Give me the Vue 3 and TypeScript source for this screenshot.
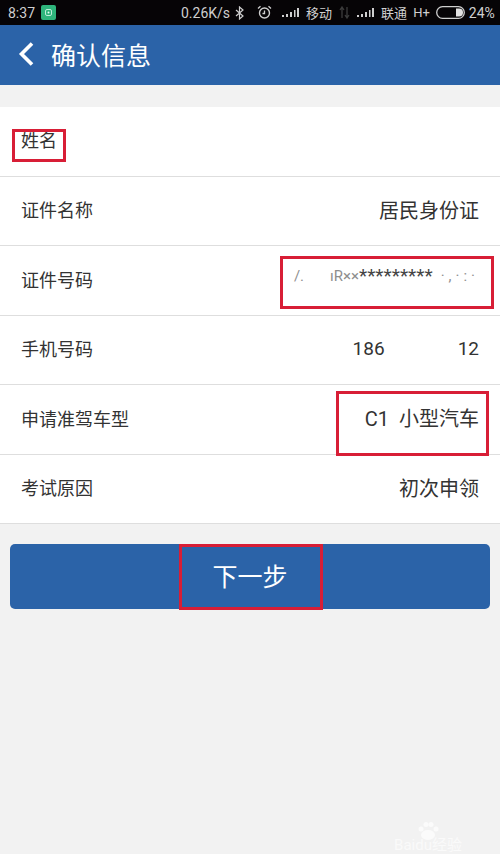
<template>
  <div class="page">
    <div class="status">
      <span class="time">8:37</span>
      <svg class="app-icon" width="15" height="15" viewBox="0 0 15 15">
        <rect width="15" height="15" rx="2" fill="#2fb57c" />
        <rect x="4.5" y="4.5" width="6" height="6" rx="1.5" fill="none" stroke="#bdeed8" />
        <circle cx="7.5" cy="7.5" r="1" fill="#e4fff2" />
      </svg>
      <span class="speed">0.26K/s</span>
      <svg class="bt" width="9" height="14" viewBox="0 0 9 14">
        <path d="M1 4l7 6-3.5 3V1L8 4 1 10" fill="none" stroke="#cfcfcf" stroke-width="1.2" />
      </svg>
      <svg class="alarm" width="15" height="15" viewBox="0 0 15 15">
        <circle cx="7.5" cy="8" r="5" fill="none" stroke="#cfcfcf" stroke-width="1.4" />
        <path d="M1 3.5L3.5 1.2M14 3.5L11.5 1.2M7.5 5.5V8.5H5.5" fill="none" stroke="#cfcfcf" stroke-width="1.3" />
      </svg>
      <svg class="signal" width="17" height="11" viewBox="0 0 17 11">
        <path d="M0 8h2v2H0zM4 7h2v3H4zM8 5h2v5H8zM12 3h1.500v7H12zM15 1h2v9h-2z" fill="#cfcfcf" />
      </svg>
      <span class="carrier">移动</span>
      <svg class="arrows" width="11" height="13" viewBox="0 0 11 13">
        <path d="M3 12V2M1 4l2-3 2 3M8 1v10M6 9l2 3 2-3" fill="none" stroke="#3c3c3c" stroke-width="1.300" />
      </svg>
      <svg class="signal second" width="17" height="11" viewBox="0 0 17 11">
        <path d="M0 8h2v2H0zM4 7h2v3H4zM8 5h2v5H8zM12 3h1.500v7H12zM15 1h2v9h-2z" fill="#cfcfcf" />
      </svg>
      <span class="carrier">联通</span>
      <span class="net">H+</span>
      <svg class="battery" width="29" height="13" viewBox="0 0 29 13">
        <rect x="0.700" y="0.700" width="27.600" height="11.600" rx="5.800" fill="none" stroke="#cfcfcf" stroke-width="1.300" />
        <path d="M20 2.500h3a4 4 0 0 1 0 8h-3z" fill="#e2e2e2" />
      </svg>
      <span class="percent">24%</span>
    </div>

    <header class="topbar">
      <svg class="back" width="16" height="24" viewBox="0 0 16 24">
        <path d="M14 1.500L3.500 12 14 22.500" fill="none" stroke="#fff" stroke-width="3.600" />
      </svg>
      <h1>确认信息</h1>
    </header>

    <section class="list">
      <div class="row name-row">
        <span class="name">姓名</span>
      </div>
      <div v-for="item in rows" :key="item.label" class="row">
        <span class="label">{{ item.label }}</span>
        <span v-if="item.label === '证件号码'" class="masked">
          <i>/.</i><i class="gap">ıR××</i><b>*********</b><i class="tail">·,·:·</i>
        </span>
        <span v-else class="value" :class="{ spaced: item.label === '手机号码' }">
          <template v-if="item.parts">
            <span v-for="part in item.parts" :key="part">{{ part }}</span>
          </template>
          <template v-else>{{ item.value }}</template>
        </span>
      </div>
      <div class="mark mark-name"></div>
      <div class="mark mark-id"></div>
      <div class="mark mark-type"></div>
    </section>

    <div class="action">
      <button class="next" type="button">下一步</button>
      <div class="mark mark-next"></div>
    </div>

    <div class="watermark">
      <svg width="24" height="20" viewBox="0 0 24 20">
        <ellipse cx="12" cy="14" rx="7" ry="5" fill="#fbfbfb" />
        <circle cx="5" cy="8" r="2.500" fill="#fbfbfb" />
        <circle cx="10" cy="3.500" r="2.500" fill="#fbfbfb" />
        <circle cx="15" cy="3.500" r="2.500" fill="#fbfbfb" />
        <circle cx="20" cy="8" r="2.500" fill="#fbfbfb" />
      </svg>
      <span>Baidu经验</span>
    </div>
  </div>
</template>

<script setup lang="ts">
interface InfoRow {
  label: string;
  value?: string;
  parts?: string[];
}

const rows: InfoRow[] = [
  { label: "证件名称", value: "居民身份证" },
  { label: "证件号码" },
  { label: "手机号码", parts: ["186", "12"] },
  { label: "申请准驾车型", value: "C1  小型汽车" },
  { label: "考试原因", value: "初次申领" },
];
</script>

<style scoped>
.page {
  position: relative;
  height: 854px;
  overflow: hidden;
  background: #f2f2f2;
  font-family: "Roboto", "Noto Sans CJK SC", sans-serif;
}

.status {
  height: 25px;
  background: #060406;
  color: #cfcfcf;
  display: flex;
  align-items: center;
  padding: 0 4px 0 8px;
  font-size: 14px;
  box-sizing: border-box;
}

.app-icon {
  margin-left: 6px;
  flex: none;
}

.speed {
  margin-left: 125px;
  white-space: nowrap;
}

.bt {
  margin-left: 5px;
  flex: none;
}

.alarm {
  margin-left: 13px;
  flex: none;
}

.signal {
  margin-left: 10px;
  flex: none;
}

.signal.second {
  margin-left: 7px;
}

.carrier {
  margin-left: 7px;
  font-size: 13px;
  white-space: nowrap;
}

.arrows {
  margin-left: 7px;
  flex: none;
}

.net {
  margin-left: 6px;
  font-size: 13px;
}

.battery {
  margin-left: 6px;
  flex: none;
}

.percent {
  margin-left: 4px;
}

.topbar {
  height: 60px;
  background: #2b63a8;
  display: flex;
  align-items: center;
  padding-left: 18px;
  padding-bottom: 2px;
  box-sizing: border-box;
  color: #fff;
}

.topbar h1 {
  margin: 0 0 0 17px;
  font-size: 25px;
  font-weight: 400;
}

.list {
  position: relative;
  margin-top: 22px;
  background: #fff;
}

.row {
  height: 69.500px;
  box-sizing: border-box;
  border-bottom: 1px solid #dedede;
  display: flex;
  align-items: center;
  justify-content: space-between;
  padding: 0 21px 3px;
  color: #333;
}

.name-row {
  padding-bottom: 4px;
}

.name {
  font-size: 18px;
}

.label {
  font-size: 18px;
}

.value {
  font-size: 20px;
  white-space: pre;
}

.value.spaced {
  display: flex;
  gap: 73px;
  font-size: 19px;
}

.masked {
  font-size: 19px;
  color: #444;
  display: flex;
  align-items: center;
  margin-top: -6px;
  white-space: nowrap;
}

.masked i {
  font-style: normal;
  font-size: 15px;
  opacity: 0.6;
}

.masked .gap {
  margin-left: 26px;
}

.masked .tail {
  margin-left: 8px;
  letter-spacing: 4px;
}

.masked b {
  font-weight: 400;
}

.mark {
  position: absolute;
  box-sizing: border-box;
  border: 3px solid #d81e36;
  pointer-events: none;
}

.mark-name {
  left: 12px;
  top: 22px;
  width: 54px;
  height: 33px;
}

.mark-id {
  left: 280px;
  top: 149px;
  width: 214px;
  height: 53px;
}

.mark-type {
  left: 336px;
  top: 284px;
  width: 153px;
  height: 65px;
}

.action {
  position: relative;
  margin: 20px 10px 0;
}

.next {
  display: block;
  width: 100%;
  height: 65px;
  border: 0;
  border-radius: 5px;
  background: #2b63a8;
  color: #fff;
  font-family: inherit;
  font-size: 25px;
  padding-bottom: 4px;
}

.mark-next {
  left: 169px;
  top: 0;
  width: 144px;
  height: 66px;
}

.watermark {
  position: absolute;
  left: 383px;
  bottom: 0;
  width: 90px;
  display: flex;
  flex-direction: column;
  align-items: center;
  font-size: 15px;
  line-height: 17px;
  color: #fafafa;
}

.watermark svg {
  margin-bottom: -4px;
}
</style>
